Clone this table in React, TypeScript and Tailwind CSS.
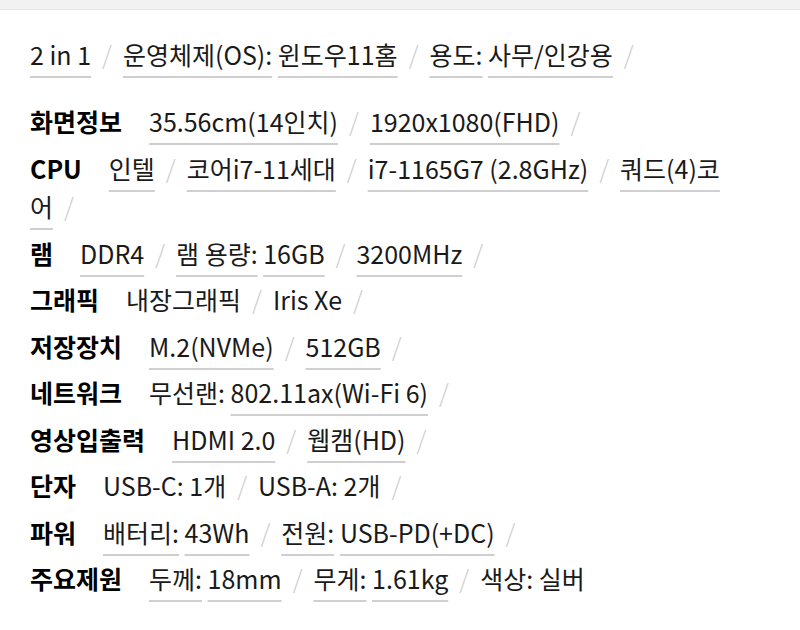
type Part = { text: string; link?: boolean };

type Spec = {
  label: string;
  groups: Part[][];
};

const top: Part[][] = [
  [{ text: "2 in 1", link: true }],
  [
    { text: "운영체제(OS):", link: true },
    { text: "윈도우11홈", link: true },
  ],
  [
    { text: "용도:", link: true },
    { text: "사무/인강용", link: true },
  ],
];

const specs: Spec[] = [
  {
    label: "화면정보",
    groups: [
      [{ text: "35.56cm(14인치)", link: true }],
      [{ text: "1920x1080(FHD)", link: true }],
    ],
  },
  {
    label: "CPU",
    groups: [
      [{ text: "인텔", link: true }],
      [{ text: "코어i7-11세대", link: true }],
      [{ text: "i7-1165G7 (2.8GHz)", link: true }],
      [{ text: "쿼드(4)코어", link: true }],
    ],
  },
  {
    label: "램",
    groups: [
      [{ text: "DDR4", link: true }],
      [
        { text: "램 용량:", link: true },
        { text: "16GB", link: true },
      ],
      [{ text: "3200MHz", link: true }],
    ],
  },
  {
    label: "그래픽",
    groups: [[{ text: "내장그래픽" }], [{ text: "Iris Xe" }]],
  },
  {
    label: "저장장치",
    groups: [
      [{ text: "M.2(NVMe)", link: true }],
      [{ text: "512GB", link: true }],
    ],
  },
  {
    label: "네트워크",
    groups: [
      [
        { text: "무선랜:" },
        { text: "802.11ax(Wi-Fi 6)", link: true },
      ],
    ],
  },
  {
    label: "영상입출력",
    groups: [
      [{ text: "HDMI 2.0", link: true }],
      [{ text: "웹캠(HD)", link: true }],
    ],
  },
  {
    label: "단자",
    groups: [[{ text: "USB-C: 1개" }], [{ text: "USB-A: 2개" }]],
  },
  {
    label: "파워",
    groups: [
      [
        { text: "배터리:", link: true },
        { text: "43Wh", link: true },
      ],
      [
        { text: "전원:", link: true },
        { text: "USB-PD(+DC)", link: true },
      ],
    ],
  },
  {
    label: "주요제원",
    groups: [
      [
        { text: "두께:", link: true },
        { text: "18mm", link: true },
      ],
      [
        { text: "무게:", link: true },
        { text: "1.61kg", link: true },
      ],
      [{ text: "색상: 실버" }],
    ],
  },
];

function Groups({
  groups,
  trailing,
}: {
  groups: Part[][];
  trailing: boolean;
}) {
  return (
    <>
      {groups.map((g, gi) => (
        <span key={gi}>
          {g.map((p, pi) => (
            <span key={pi}>
              {pi > 0 && " "}
              <span
                className={
                  p.link
                    ? "underline decoration-[#cfcfcf] decoration-2 underline-offset-[11px]"
                    : ""
                }
              >
                {p.text}
              </span>
            </span>
          ))}
          {(gi < groups.length - 1 || trailing) && (
            <span className="mx-[11px] font-light text-[#cdcdcd]">/</span>
          )}
        </span>
      ))}
    </>
  );
}

export default function App() {
  return (
    <div
      className="min-h-[630px] w-[800px] bg-white text-[25px] text-[#1a1a1a]"
      style={{ fontFamily: '"Noto Sans CJK KR", "Noto Sans", sans-serif' }}
    >
      <div className="h-[10px] border-b border-[#e6e6e6] bg-[#f2f2f2]" />

      <div className="pl-[30px] pr-[55px] pt-[25px]">
        <p className="leading-[39px]">
          <Groups groups={top} trailing />
        </p>

        <div className="mt-[28px] flex flex-col gap-[8px]">
          {specs.map((s) => (
            <p key={s.label} className="leading-[38.5px]">
              <span className="mr-[27px] font-bold text-black">
                {s.label}
              </span>
              <Groups
                groups={s.groups}
                trailing={s.label !== "주요제원"}
              />
            </p>
          ))}
        </div>
      </div>
    </div>
  );
}
